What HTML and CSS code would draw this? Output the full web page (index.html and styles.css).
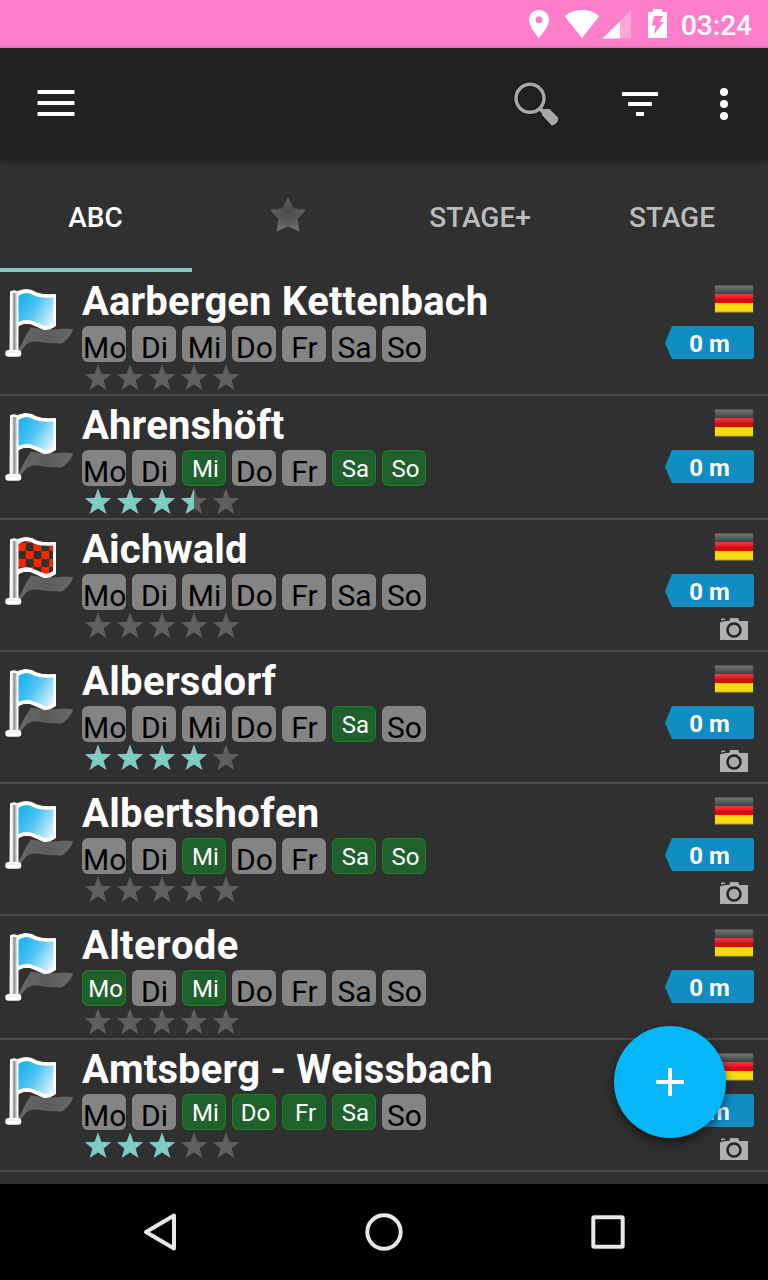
FILE: index.html
```
<!DOCTYPE html>
<html lang="de">
<head>
<meta charset="utf-8">
<title>Stellplätze</title>
<link rel="stylesheet" href="styles.css">
</head>
<body>
<svg class="defs" aria-hidden="true">
  <defs>
    <linearGradient id="sky" x1="0" y1="0.2" x2="1" y2="0.8"><stop offset="0" stop-color="#1cb2ee"/><stop offset=".45" stop-color="#50c4f2"/><stop offset="1" stop-color="#d8f2fc"/></linearGradient>
    <linearGradient id="pole" x1="0" x2="1" y1="0" y2="0"><stop offset="0" stop-color="#fff"/><stop offset=".3" stop-color="#eee"/><stop offset=".55" stop-color="#888"/><stop offset=".8" stop-color="#bbb"/><stop offset="1" stop-color="#eee"/></linearGradient>
    <linearGradient id="shade" x1="0" x2="1" y1="0" y2="0"><stop offset="0" stop-color="#686868"/><stop offset=".5" stop-color="#5b5c5c"/><stop offset="1" stop-color="#686868"/></linearGradient>
    <linearGradient id="black" x1="0" x2="0" y1="0" y2="1"><stop offset="0" stop-color="#767676"/><stop offset="1" stop-color="#3e3e3e"/></linearGradient>
    <linearGradient id="red" x1="0" x2="0" y1="0" y2="1"><stop offset="0" stop-color="#e84048"/><stop offset=".5" stop-color="#e01820"/><stop offset=".55" stop-color="#dc0510"/><stop offset="1" stop-color="#dc0510"/></linearGradient>
    <radialGradient id="tabstar" cx=".5" cy=".4" r=".65"><stop offset="0" stop-color="#4c4c4c"/><stop offset=".5" stop-color="#585858"/><stop offset="1" stop-color="#767676"/></radialGradient>
    <pattern id="checks" x="18" y="23" width="15.6" height="16" patternUnits="userSpaceOnUse"><path fill="#ff2400" d="M0 0h15.600v16H0z"/><path fill="#30302c" d="M7.800 0h7.800v8H7.800zM0 8h7.800v8H0z"/></pattern>
  </defs>
  <symbol id="flagbase" viewBox="0 0 76 90">
    <path fill="url(#shade)" d="M18 79L25 65 31 55.500Q45 58 57 57Q66 56 73 57.500Q71 65 62 71.500Q48 72 37 69.500Q29 69 25 74L20 80Z"/>
    <path fill="#fff" stroke="#fff" stroke-width="1" stroke-linejoin="round" d="M10.500 19.500Q14 18 17.500 19.500Q25 16 32 18.500Q40 24 55.500 22.500V54Q50 58 44 57.500Q36 54 30 51.500Q24 50 18 54V79Q14 82 10 79Z"/>
    <path fill="url(#pole)" d="M10.800 21h6.200v57h-6.600z"/>
    <rect x="5.300" y="78" width="16" height="6.800" rx="3.200" fill="#fff"/>
    <path stroke="#ddd" d="M9 80h9"/>
  </symbol>
  <symbol id="blueflag" viewBox="0 0 76 90"><use href="#flagbase"/><path fill="url(#sky)" d="M18.500 24Q25 19.500 31 22Q40 27 53.500 25.500V52Q48 55 43 53.500Q36 50 31 48.500Q24 47 18.500 50Z"/></symbol>
  <symbol id="checkflag" viewBox="0 0 76 90"><use href="#flagbase"/><path fill="url(#checks)" d="M18.500 24Q25 19.500 31 22Q40 27 53 25.500V51Q48 55 43 53Q36 50 31 48Q24 46 18.500 49Z"/></symbol>
  <symbol id="star" viewBox="0 0 32 32"><path d="M16 2.300L19.400 11.800 29.200 12.200 21.600 18.500 24.400 28 16 22.500 7.600 28 10.400 18.500 2.800 12.200 12.600 11.800Z"/></symbol>
  <symbol id="de" viewBox="0 0 40 30">
    <path fill="#555" d="M.8 1h38.400v27.700H.8z"/>
    <path fill="url(#black)" d="M1.500 2h37v8h-37z"/>
    <path fill="url(#red)" d="M1 10h38v9H1z"/><path fill="#f8da10" d="M1 19h38v9H1z"/>
    <path fill="#98851b" d="M1 27.800h38v.8H1z"/>
  </symbol>
  <symbol id="camera" viewBox="0 0 32 26">
    <path fill="#b0b0b0" stroke="#242424" stroke-width=".8" d="M1.500 4.500H11L12 1.500H20.500L21.500 4.500H30.500V24.500H1.500Z"/>
    <path fill="#aaa" stroke="#202020" stroke-width="1.200" d="M2.500 2h5.500v2L2.500 5.500z"/>
    <circle cx="16" cy="14" r="6.500" fill="#aaa" stroke="#222" stroke-width="2.500"/>
  </symbol>
</svg>

<div class="screen">
  <header class="status">
    <svg class="status-icons" viewBox="0 0 150 48">
      <path fill="#fff" fill-rule="evenodd" d="M19 10c-5.700 0-10 4.400-10 9.800C9 27 19 38 19 38s10-11 10-18.200C29 14.400 24.700 10 19 10zm0 6.200a3.500 3.500 0 1 1 0 7 3.500 3.500 0 0 1 0-7z"/>
      <path fill="#fff" d="M44.800 16.200C54 8 70 8 79.200 16.200L62 38Z"/>
      <path fill="#fff" opacity=".3" d="M111 10V38.500H83Z"/><path fill="#fff" d="M100 21.500V38.500H82.500Z"/>
      <path fill="#fff" d="M128 12h5V9h9v3h5v26h-19z"/>
      <path fill="#fb80c8" d="M134 16h9l-3.200 6h4L134 34.500l1.800-9h-4z"/>
    </svg>
    <span class="clock">03:24</span>
  </header>

  <div class="toolbar">
    <svg class="menu" viewBox="0 0 40 28"><path fill="#fff" d="M1.500 1h37v4h-37zM1.500 12h37v4h-37zM1.500 23h37v4h-37z"/></svg>
    <svg class="search" viewBox="0 0 48 48"><g fill="none" stroke="#161616" stroke-width="5.500"><circle cx="18" cy="18.300" r="14"/><path d="M27 27.500l6 6"/></g><path d="M35 34.500l6 6" stroke="#161616" stroke-width="12" stroke-linecap="round"/><circle cx="18" cy="18.300" r="14" fill="none" stroke="#a8a8a8" stroke-width="3.500"/><path d="M27.500 28l5 5" stroke="#a8a8a8" stroke-width="4"/><path fill="#a8a8a8" d="M30 35v-3.500l2.500-2.500h5l8.500 8.500q1 2.500-1 5t-5.500 3z"/></svg>
    <svg class="filter" viewBox="0 0 36 24"><path fill="#fff" d="M0 0h36v4H0zM6 10h24v4H6zM14 20h8v4h-8z"/></svg>
    <svg class="more" viewBox="0 0 8 32"><g fill="#fff"><circle cx="4" cy="4" r="4"/><circle cx="4" cy="16" r="4"/><circle cx="4" cy="28" r="4"/></g></svg>
  </div>

  <nav class="tabs">
    <div class="tab active">ABC</div>
    <div class="tab"><svg class="tab-star" viewBox="0 0 38 36"><path fill="url(#tabstar)" stroke="#505050" stroke-width=".5" d="M19 1.500L24.500 12.500 36.500 14 28.800 22.500 30.300 35.500 19 30.500 7.700 35.500 9.200 22.500 1.500 14 13.500 12.500Z"/></svg></div>
    <div class="tab">STAGE+</div>
    <div class="tab">STAGE</div>
  </nav>

  <main class="list">
    <article class="row">
      <svg class="flag"><use href="#blueflag"/></svg>
      <div class="info"><h2>Aarbergen Kettenbach</h2>
        <div class="days"><span>Mo</span><span>Di</span><span>Mi</span><span>Do</span><span>Fr</span><span>Sa</span><span>So</span></div>
        <div class="stars"><svg><use href="#star"/></svg><svg><use href="#star"/></svg><svg><use href="#star"/></svg><svg><use href="#star"/></svg><svg><use href="#star"/></svg></div></div>
      <div class="side"><svg class="country"><use href="#de"/></svg><div class="distance">0 m</div></div>
    </article>
    <article class="row">
      <svg class="flag"><use href="#blueflag"/></svg>
      <div class="info"><h2>Ahrenshöft</h2>
        <div class="days"><span>Mo</span><span>Di</span><span class="open">Mi</span><span>Do</span><span>Fr</span><span class="open">Sa</span><span class="open">So</span></div>
        <div class="stars"><svg class="on"><use href="#star"/></svg><svg class="on"><use href="#star"/></svg><svg class="on"><use href="#star"/></svg><svg viewBox="0 0 32 32"><use href="#star"/><path class="half" d="M16 2.300V22.500L7.600 28 10.400 18.500 2.800 12.200 12.600 11.800Z"/></svg><svg><use href="#star"/></svg></div></div>
      <div class="side"><svg class="country"><use href="#de"/></svg><div class="distance">0 m</div></div>
    </article>
    <article class="row photo">
      <svg class="flag"><use href="#checkflag"/></svg>
      <div class="info"><h2>Aichwald</h2>
        <div class="days"><span>Mo</span><span>Di</span><span>Mi</span><span>Do</span><span>Fr</span><span>Sa</span><span>So</span></div>
        <div class="stars"><svg><use href="#star"/></svg><svg><use href="#star"/></svg><svg><use href="#star"/></svg><svg><use href="#star"/></svg><svg><use href="#star"/></svg></div></div>
      <div class="side"><svg class="country"><use href="#de"/></svg><div class="distance">0 m</div><svg class="camera"><use href="#camera"/></svg></div>
    </article>
    <article class="row photo">
      <svg class="flag"><use href="#blueflag"/></svg>
      <div class="info"><h2 class="wide">Albersdorf</h2>
        <div class="days"><span>Mo</span><span>Di</span><span>Mi</span><span>Do</span><span>Fr</span><span class="open">Sa</span><span>So</span></div>
        <div class="stars"><svg class="on"><use href="#star"/></svg><svg class="on"><use href="#star"/></svg><svg class="on"><use href="#star"/></svg><svg class="on"><use href="#star"/></svg><svg><use href="#star"/></svg></div></div>
      <div class="side"><svg class="country"><use href="#de"/></svg><div class="distance">0 m</div><svg class="camera"><use href="#camera"/></svg></div>
    </article>
    <article class="row photo">
      <svg class="flag"><use href="#blueflag"/></svg>
      <div class="info"><h2 class="wide">Albertshofen</h2>
        <div class="days"><span>Mo</span><span>Di</span><span class="open">Mi</span><span>Do</span><span>Fr</span><span class="open">Sa</span><span class="open">So</span></div>
        <div class="stars"><svg><use href="#star"/></svg><svg><use href="#star"/></svg><svg><use href="#star"/></svg><svg><use href="#star"/></svg><svg><use href="#star"/></svg></div></div>
      <div class="side"><svg class="country"><use href="#de"/></svg><div class="distance">0 m</div><svg class="camera"><use href="#camera"/></svg></div>
    </article>
    <article class="row">
      <svg class="flag"><use href="#blueflag"/></svg>
      <div class="info"><h2 class="wide">Alterode</h2>
        <div class="days"><span class="open">Mo</span><span>Di</span><span class="open">Mi</span><span>Do</span><span>Fr</span><span>Sa</span><span>So</span></div>
        <div class="stars"><svg><use href="#star"/></svg><svg><use href="#star"/></svg><svg><use href="#star"/></svg><svg><use href="#star"/></svg><svg><use href="#star"/></svg></div></div>
      <div class="side"><svg class="country"><use href="#de"/></svg><div class="distance">0 m</div></div>
    </article>
    <article class="row photo">
      <svg class="flag"><use href="#blueflag"/></svg>
      <div class="info"><h2>Amtsberg - Weissbach</h2>
        <div class="days"><span>Mo</span><span>Di</span><span class="open">Mi</span><span class="open">Do</span><span class="open">Fr</span><span class="open">Sa</span><span>So</span></div>
        <div class="stars"><svg class="on"><use href="#star"/></svg><svg class="on"><use href="#star"/></svg><svg class="on"><use href="#star"/></svg><svg><use href="#star"/></svg><svg><use href="#star"/></svg></div></div>
      <div class="side"><svg class="country"><use href="#de"/></svg><div class="distance">0 m</div><svg class="camera"><use href="#camera"/></svg></div>
    </article>
    <button class="fab" aria-label="Hinzufügen"><svg viewBox="0 0 28 28"><path fill="#fff" d="M12 0h4v12h12v4H16v12h-4V16H0v-4h12z"/></svg></button>
  </main>

  <footer class="navbar">
    <svg viewBox="0 0 48 48"><path d="M38 7.500V40.500L10 24Z"/></svg>
    <svg viewBox="0 0 48 48"><circle cx="24" cy="24" r="16.700"/></svg>
    <svg viewBox="0 0 48 48"><rect x="9.300" y="9.300" width="29.400" height="29.400" rx="1"/></svg>
  </footer>
</div>
</body>
</html>
```
FILE: styles.css
```
* { box-sizing: border-box; }
body { margin: 0; font-family: Roboto, sans-serif; background: #303030; color: #fff; }
svg { display: block; flex: none; }
.defs { position: absolute; width: 0; height: 0; }
.screen { width: 768px; height: 1280px; display: flex; flex-direction: column; overflow: hidden; }

.status { height: 48px; flex: none; background: #fd7ec9; display: flex; justify-content: flex-end; align-items: center; padding-right: 16px; }
.status-icons { width: 150px; height: 48px; margin-right: 11px; }
.clock { font-size: 28px; font-weight: 500; line-height: 48px; padding-top: 4px; }

.toolbar { height: 112px; flex: none; background: #212121; display: flex; align-items: center; padding: 0 40px 0 36px; box-shadow: 0 1px 5px rgba(0,0,0,.4); z-index: 1; }
.menu { width: 40px; height: 28px; margin-top: -2px; }
.search { width: 48px; height: 48px; margin-left: auto; margin-right: 62px; }
.filter { width: 36px; height: 24px; margin-right: 62px; }
.more { width: 8px; height: 32px; }

.tabs { height: 112px; flex: none; display: grid; grid-template-columns: repeat(4, 192px); }
.tab { display: flex; align-items: center; justify-content: center; font-size: 28px; font-weight: 500; color: #bcbcbc; border-bottom: 4px solid transparent; padding-top: 6px; }
.tab.active { color: #fff; border-color: #80cbc4; padding-right: 1px; }
.tab-star { width: 38px; height: 36px; margin-top: -6px; }

.list { flex: 1; min-height: 0; position: relative; }
.row { height: 124px; display: flex; border-bottom: 2px solid #4b4b4b; }
.row.photo { height: 132px; }
.flag { width: 76px; height: 90px; }
.info { padding: 6px 0 0 6px; flex: 1; }
h2 { margin: 0; height: 48px; line-height: 48px; font-size: 40px; font-weight: 700; font-kerning: none; letter-spacing: .12px; white-space: nowrap; }
h2.wide { letter-spacing: .33px; }
.days { display: flex; gap: 6px; height: 36px; }
.days span { width: 44px; height: 36px; border-radius: 6px; background: #848484; color: #000; font-size: 30px; line-height: 43px; text-align: center; padding-left: 1px; white-space: nowrap; }
.days .open { background: #20602d; border: 1px solid #128422; color: #fff; font-size: 24px; line-height: 36px; padding-left: 3px; }
.stars { display: flex; }
.stars svg { width: 32px; height: 32px; fill: #5f5f5f; }
.stars .on, .stars .half { fill: #80cbc4; }

.side { width: 103px; padding: 12px 14px 0 0; display: flex; flex-direction: column; align-items: flex-end; }
.country { width: 40px; height: 30px; }
.distance { width: 89px; height: 33px; margin-top: 12px; background: #0f8ec1; clip-path: polygon(7px 0, 88px 0, 89px 3px, 89px 30px, 88px 33px, 7px 33px, 0 17px); font-size: 24px; font-weight: 700; line-height: 36px; text-align: center; }
.camera { width: 32px; height: 26px; margin: 9px 4px 0 0; }

.fab { position: absolute; right: 42px; bottom: 46px; width: 112px; height: 112px; border: 0; border-radius: 50%; background: #03b7f9; display: flex; align-items: center; justify-content: center; box-shadow: 0 6px 10px rgba(0,0,0,.4), 0 0 8px rgba(0,0,0,.15); }
.fab svg { width: 28px; height: 28px; }

.navbar { height: 96px; flex: none; background: #000; display: flex; justify-content: center; align-items: center; gap: 176px; z-index: 2; }
.navbar svg { width: 48px; height: 48px; fill: none; stroke: #e8e8e8; stroke-width: 4; stroke-linejoin: round; }
```
